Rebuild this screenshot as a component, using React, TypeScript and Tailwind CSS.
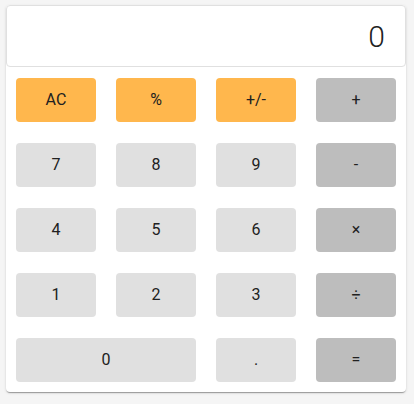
import { useState } from 'react';

type Key = {
	label: string
	kind: 'fn' | 'num' | 'op'
	wide?: boolean
}

const KEYS: Key[] = [
	{ label: 'AC', kind: 'fn' },
	{ label: '%', kind: 'fn' },
	{ label: '+/-', kind: 'fn' },
	{ label: '+', kind: 'op' },
	{ label: '7', kind: 'num' },
	{ label: '8', kind: 'num' },
	{ label: '9', kind: 'num' },
	{ label: '-', kind: 'op' },
	{ label: '4', kind: 'num' },
	{ label: '5', kind: 'num' },
	{ label: '6', kind: 'num' },
	{ label: '×', kind: 'op' },
	{ label: '1', kind: 'num' },
	{ label: '2', kind: 'num' },
	{ label: '3', kind: 'num' },
	{ label: '÷', kind: 'op' },
	{ label: '0', kind: 'num', wide: true },
	{ label: '.', kind: 'num' },
	{ label: '=', kind: 'op' },
]

const COLOR = {
	fn: 'bg-[#ffb74d]',
	num: 'bg-[#e0e0e0]',
	op: 'bg-[#bdbdbd]',
}

const App = () => {
	const [display] = useState('0');

	return (
		<div className="min-h-[404px] bg-[#f5f5f5] pt-[5px] px-[6px] font-['Roboto',sans-serif] text-[#212121]">
			<div className="w-[400px] rounded bg-white shadow-[0_2px_1px_-1px_rgba(0,0,0,0.2),0_1px_1px_0_rgba(0,0,0,0.14),0_1px_3px_0_rgba(0,0,0,0.12)]">
				{/* Display */}
				<div className="h-[62px] flex items-center justify-end pr-5 pt-[1px] rounded border border-[#e0e0e0] text-[30px] font-light leading-none">
					{display}
				</div>

				{/* Keys */}
				<div className="grid grid-cols-4 gap-x-5 gap-y-[21px] px-[10px] pt-[11px] pb-[10px]">
					{KEYS.map(k => (
						<button
							key={k.label}
							className={`h-[44px] rounded ${COLOR[k.kind]} ${k.wide ? 'col-span-2' : ''} text-base font-normal`}
						>
							{k.label}
						</button>
					))}
				</div>
			</div>
		</div>
	)
}

export default App;
